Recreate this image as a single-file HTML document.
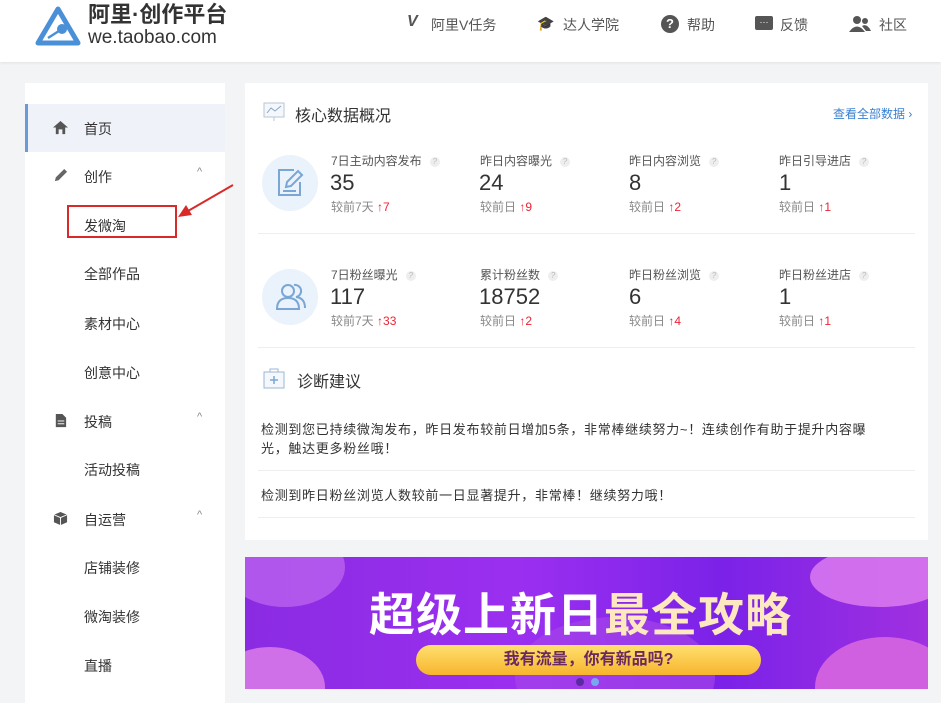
<!DOCTYPE html>
<html><head><meta charset="utf-8"><style>
*{margin:0;padding:0;box-sizing:border-box}
body{width:941px;height:689px;overflow:hidden;background:#f3f4f6;font-family:"Liberation Sans","Noto Sans CJK SC",sans-serif;color:#333;position:relative}
.hdr{position:absolute;left:0;top:0;width:941px;height:62px;background:#fff;box-shadow:0 1px 3px rgba(0,0,0,.08)}
.abs{position:absolute;white-space:nowrap}
.nav{font-size:14px;color:#555;top:15px}
.side{position:absolute;left:25px;top:83px;width:200px;height:620px;background:#fff}
.si{position:absolute;left:0;width:200px;height:48px;font-size:14px;color:#333}
.si span{position:absolute;left:59px;top:15px}
.si .ic{position:absolute;left:28px;top:16px;width:15px;height:15px}
.si .car{position:absolute;left:172px;top:14px;font-size:11px;color:#888}
.card{position:absolute;left:245px;top:83px;width:683px;height:457px;background:#fff}
.lab{font-size:12px;color:#555}
.num{font-size:22px;color:#333}
.cmp{font-size:12px;color:#888}
.cmp b{color:#e23;font-weight:normal}
.q{display:inline-block;width:10px;height:10px;border-radius:50%;background:#eee;color:#bbb;font-size:8px;text-align:center;line-height:10px;margin-left:8px;vertical-align:1px}
.hr{position:absolute;left:13px;width:657px;height:1px;background:#eee}
.circ{position:absolute;width:56px;height:56px;border-radius:50%;background:#eaf2fb}
</style></head><body>
<div class="hdr">
<svg class="abs" style="left:34px;top:5px" width="48" height="42" viewBox="0 0 48 42"><path d="M24 4 L44 38 L4 38 Z" fill="none" stroke="#4a90d9" stroke-width="5" stroke-linejoin="round"/><circle cx="28" cy="24" r="5" fill="#4a90d9"/><line x1="28" y1="24" x2="14" y2="33" stroke="#4a90d9" stroke-width="2.5"/></svg>
<div class="abs" style="left:88px;top:2px;font-size:22px;line-height:26px;font-weight:bold;color:#333">阿里·创作平台</div>
<div class="abs" style="left:88px;top:27px;font-size:19px;line-height:22px;color:#333">we.taobao.com</div>
<div class="abs nav" style="left:407px;font-weight:bold;font-style:italic;font-size:16px;color:#555;top:13px">V</div>
<div class="abs nav" style="left:431px">阿里V任务</div>
<div class="abs nav" style="left:537px">🎓</div><div class="abs nav" style="left:563px">达人学院</div>
<div class="abs" style="left:661px;top:15px;width:18px;height:18px;border-radius:50%;background:#555;color:#fff;font-size:13px;font-weight:bold;text-align:center;line-height:18px">?</div><div class="abs nav" style="left:687px">帮助</div>
<div class="abs" style="left:755px;top:16px;width:18px;height:14px;border-radius:2px;background:#555;color:#fff;font-size:9px;text-align:center;line-height:12px">···</div><div class="abs nav" style="left:780px">反馈</div>
<svg class="abs" style="left:849px;top:15px" width="22" height="18" viewBox="0 0 22 18"><circle cx="8" cy="5" r="4" fill="#555"/><path d="M0 17 Q8 6 16 17Z" fill="#555"/><circle cx="16" cy="6" r="3" fill="#555"/><path d="M13 11 Q18 8 22 16 L17 16Z" fill="#555"/></svg><div class="abs nav" style="left:879px">社区</div>
</div>

<div class="side">
<div class="si" style="top:21px;background:#eff3f9;border-left:3px solid #6a9bd8"><svg class="ic" style="left:25px" viewBox="0 0 16 16"><path d="M8 1 L16 8 L13 8 L13 15 L10 15 L10 10 L6 10 L6 15 L3 15 L3 8 L0 8Z" fill="#555"/></svg><span style="left:56px">首页</span></div>
<div class="si" style="top:69px"><svg class="ic" viewBox="0 0 16 16"><path d="M2 14 L3 10 L12 1 L15 4 L6 13Z" fill="#666"/></svg><span>创作</span><div class="car">^</div></div>
<div class="si" style="top:118px"><span>发微淘</span></div>
<div class="si" style="top:166px"><span>全部作品</span></div>
<div class="si" style="top:216px"><span>素材中心</span></div>
<div class="si" style="top:265px"><span>创意中心</span></div>
<div class="si" style="top:314px"><svg class="ic" viewBox="0 0 16 16"><path d="M3 1 L10 1 L14 5 L14 15 L3 15Z" fill="#555"/><rect x="5" y="8" width="7" height="1" fill="#fff"/><rect x="5" y="11" width="7" height="1" fill="#fff"/></svg><span>投稿</span><div class="car">^</div></div>
<div class="si" style="top:362px"><span>活动投稿</span></div>
<div class="si" style="top:412px"><svg class="ic" viewBox="0 0 16 16"><path d="M8 1 L15 4 L15 12 L8 15 L1 12 L1 4Z" fill="#555"/><path d="M1 4 L8 7 L15 4 M8 7 L8 15" stroke="#fff" fill="none"/></svg><span>自运营</span><div class="car">^</div></div>
<div class="si" style="top:460px"><span>店铺装修</span></div>
<div class="si" style="top:509px"><span>微淘装修</span></div>
<div class="si" style="top:558px"><span>直播</span></div>
</div>
<div class="abs" style="left:67px;top:205px;width:110px;height:33px;border:2px solid #d92a2a"></div>
<svg class="abs" style="left:170px;top:180px" width="70" height="45"><line x1="63" y1="5" x2="18" y2="31" stroke="#d92a2a" stroke-width="2"/><path d="M8 37 L16 25 L22 35Z" fill="#d92a2a"/></svg>

<div class="card">
<svg class="abs" style="left:18px;top:19px" width="22" height="20" viewBox="0 0 22 20"><rect x="1" y="1" width="20" height="14" fill="#f4f7fb" stroke="#b8c6d6"/><path d="M4 11 L8 6 L12 9 L18 4" stroke="#8aa6c6" fill="none"/><line x1="11" y1="15" x2="11" y2="19" stroke="#b8c6d6"/></svg>
<div class="abs" style="left:50px;top:19px;font-size:16px;color:#333">核心数据概况</div>
<div class="abs" style="left:588px;top:22px;font-size:12px;color:#3a80d0">查看全部数据 ›</div>

<div class="circ" style="left:17px;top:72px"></div>
<svg class="abs" style="left:31px;top:84px" width="30" height="32" viewBox="0 0 30 32"><path d="M18 3 L3 3 L3 28 L24 28 L24 15" fill="none" stroke="#7aa6d6" stroke-width="2"/><path d="M10 20 L11 15 L22 4 L26 8 L15 19Z" fill="none" stroke="#7aa6d6" stroke-width="2"/><line x1="7" y1="24" x2="20" y2="24" stroke="#7aa6d6" stroke-width="2"/></svg>
<div class="abs lab" style="left:86px;top:69px">7日主动内容发布<i class="q">?</i></div>
<div class="abs num" style="left:85px;top:87px">35</div>
<div class="abs cmp" style="left:86px;top:115px">较前7天 <b>↑7</b></div>
<div class="abs lab" style="left:235px;top:69px">昨日内容曝光<i class="q">?</i></div>
<div class="abs num" style="left:234px;top:87px">24</div>
<div class="abs cmp" style="left:235px;top:115px">较前日 <b>↑9</b></div>
<div class="abs lab" style="left:384px;top:69px">昨日内容浏览<i class="q">?</i></div>
<div class="abs num" style="left:384px;top:87px">8</div>
<div class="abs cmp" style="left:384px;top:115px">较前日 <b>↑2</b></div>
<div class="abs lab" style="left:534px;top:69px">昨日引导进店<i class="q">?</i></div>
<div class="abs num" style="left:534px;top:87px">1</div>
<div class="abs cmp" style="left:534px;top:115px">较前日 <b>↑1</b></div>
<div class="hr" style="top:150px"></div>

<div class="circ" style="left:17px;top:186px"></div>
<svg class="abs" style="left:30px;top:199px" width="32" height="30" viewBox="0 0 32 30"><circle cx="13" cy="9" r="6" fill="none" stroke="#7aa6d6" stroke-width="2"/><path d="M2 27 Q2 16 13 16 Q24 16 24 27Z" fill="none" stroke="#7aa6d6" stroke-width="2"/><path d="M19 3 A6 6 0 0 1 21 15 Q30 16 30 26" fill="none" stroke="#7aa6d6" stroke-width="2"/></svg>
<div class="abs lab" style="left:86px;top:183px">7日粉丝曝光<i class="q">?</i></div>
<div class="abs num" style="left:85px;top:201px">117</div>
<div class="abs cmp" style="left:86px;top:229px">较前7天 <b>↑33</b></div>
<div class="abs lab" style="left:235px;top:183px">累计粉丝数<i class="q">?</i></div>
<div class="abs num" style="left:234px;top:201px">18752</div>
<div class="abs cmp" style="left:235px;top:229px">较前日 <b>↑2</b></div>
<div class="abs lab" style="left:384px;top:183px">昨日粉丝浏览<i class="q">?</i></div>
<div class="abs num" style="left:384px;top:201px">6</div>
<div class="abs cmp" style="left:384px;top:229px">较前日 <b>↑4</b></div>
<div class="abs lab" style="left:534px;top:183px">昨日粉丝进店<i class="q">?</i></div>
<div class="abs num" style="left:534px;top:201px">1</div>
<div class="abs cmp" style="left:534px;top:229px">较前日 <b>↑1</b></div>
<div class="hr" style="top:264px"></div>

<svg class="abs" style="left:18px;top:284px" width="22" height="22" viewBox="0 0 22 22"><rect x="1" y="5" width="20" height="16" fill="#f4f7fb" stroke="#9bb6d6"/><path d="M7 5 L7 2 L15 2 L15 5" fill="none" stroke="#9bb6d6"/><path d="M11 9 L11 17 M7 13 L15 13" stroke="#7aa6d6" stroke-width="1.5"/></svg>
<div class="abs" style="left:52px;top:285px;font-size:16px;color:#333">诊断建议</div>
<div class="abs" style="left:16px;top:337px;font-size:13px;letter-spacing:0.7px;color:#333;line-height:19px;white-space:normal;width:632px">检测到您已持续微淘发布，昨日发布较前日增加5条，非常棒继续努力~！连续创作有助于提升内容曝光，触达更多粉丝哦！</div>
<div class="hr" style="top:387px"></div>
<div class="abs" style="left:16px;top:402px;font-size:13px;letter-spacing:0.7px;color:#333">检测到昨日粉丝浏览人数较前一日显著提升，非常棒！继续努力哦！</div>
<div class="hr" style="top:434px"></div>
</div>

<div class="abs" style="left:245px;top:557px;width:683px;height:132px;overflow:hidden;background:linear-gradient(90deg,#8a2be2 0%,#9b2ff0 40%,#7b22e8 70%,#a030e0 100%)">
<div class="abs" style="left:-20px;top:-30px;width:120px;height:80px;border-radius:50%;background:#c06af0;opacity:.7"></div>
<div class="abs" style="left:-30px;top:90px;width:110px;height:80px;border-radius:50%;background:#d070e8"></div>
<div class="abs" style="left:565px;top:-10px;width:140px;height:60px;border-radius:50%;background:#e080f0;opacity:.8"></div>
<div class="abs" style="left:570px;top:80px;width:140px;height:100px;border-radius:50%;background:#d060e0"></div>
<div class="abs" style="left:270px;top:60px;width:200px;height:120px;border-radius:50%;background:#a848e8;opacity:.6"></div>
<div class="abs" style="left:124px;top:22px;font-size:46px;font-weight:bold;color:#fff;letter-spacing:1px">超级上新日<span style="color:#fde8c0">最全攻略</span></div>
<div class="abs" style="left:171px;top:88px;width:345px;height:30px;border-radius:15px;background:linear-gradient(#ffe070,#f7b52c);text-align:center;font-size:16px;font-weight:bold;color:#6a2a60;line-height:30px">我有流量，你有新品吗?</div>
<div class="abs" style="left:331px;top:121px;width:8px;height:8px;border-radius:50%;background:#5a2aa0"></div>
<div class="abs" style="left:346px;top:121px;width:8px;height:8px;border-radius:50%;background:#7aa6f0"></div>
</div>
</body></html>
